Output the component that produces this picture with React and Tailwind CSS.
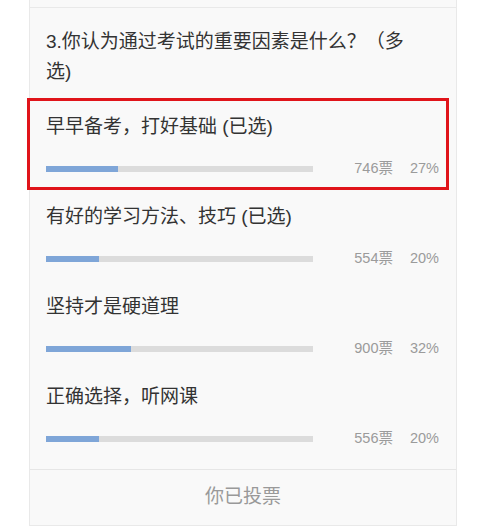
import React from 'react';

const options = [
  { label: '早早备考，打好基础 (已选)', votes: 746, pct: 27, marked: true },
  { label: '有好的学习方法、技巧 (已选)', votes: 554, pct: 20 },
  { label: '坚持才是硬道理', votes: 900, pct: 32 },
  { label: '正确选择，听网课', votes: 556, pct: 20 },
];

const font = { fontFamily: '"Liberation Sans", "Noto Sans CJK SC", sans-serif' };

const Option = ({ label, votes, pct, marked }) => (
  <div className="relative h-[90px] pl-[16px] pr-[17px] pt-[14px]">
    <div className="text-[19px] leading-[24px] text-[#333]">{label}</div>
    <div className="mt-[20px] flex h-[20px] items-center">
      <div className="h-[6px] w-[267px] bg-[#dcdcdc]">
        <div className="h-full bg-[#7fa6d8]" style={{ width: `${pct}%` }} />
      </div>
      <div className="flex flex-1 justify-end gap-[14px] text-[14.5px] text-[#9b9b9b]">
        <span>{votes}票</span>
        <span className="w-[32px] text-right">{pct}%</span>
      </div>
    </div>
    {marked && (
      <div className="pointer-events-none absolute left-[-3px] top-[-3px] h-[92px] w-[422px] border-[3px] border-[#e0141a]" />
    )}
  </div>
);

export default function App() {
  return (
    <div className="min-h-[530px] bg-white" style={font}>
      <div className="ml-[29px] w-[428px] border-x border-b border-[#e9e9e9] bg-[#f9f9f9]">
        <div className="h-[8px] border-b border-[#e9e9e9]" />
        <div className="pl-[16px] pr-[40px] pb-[14px] pt-[19px] text-[19px] leading-[30px] text-[#333]">
          3.你认为通过考试的重要因素是什么？（多选)
        </div>
        <div className="pb-[8px]">
          {options.map((o, i) => (
            <Option key={i} {...o} />
          ))}
        </div>
        <div className="flex h-[56px] items-center justify-center border-t border-[#e6e6e6] text-[19px] text-[#999]">
          你已投票
        </div>
      </div>
    </div>
  );
}
